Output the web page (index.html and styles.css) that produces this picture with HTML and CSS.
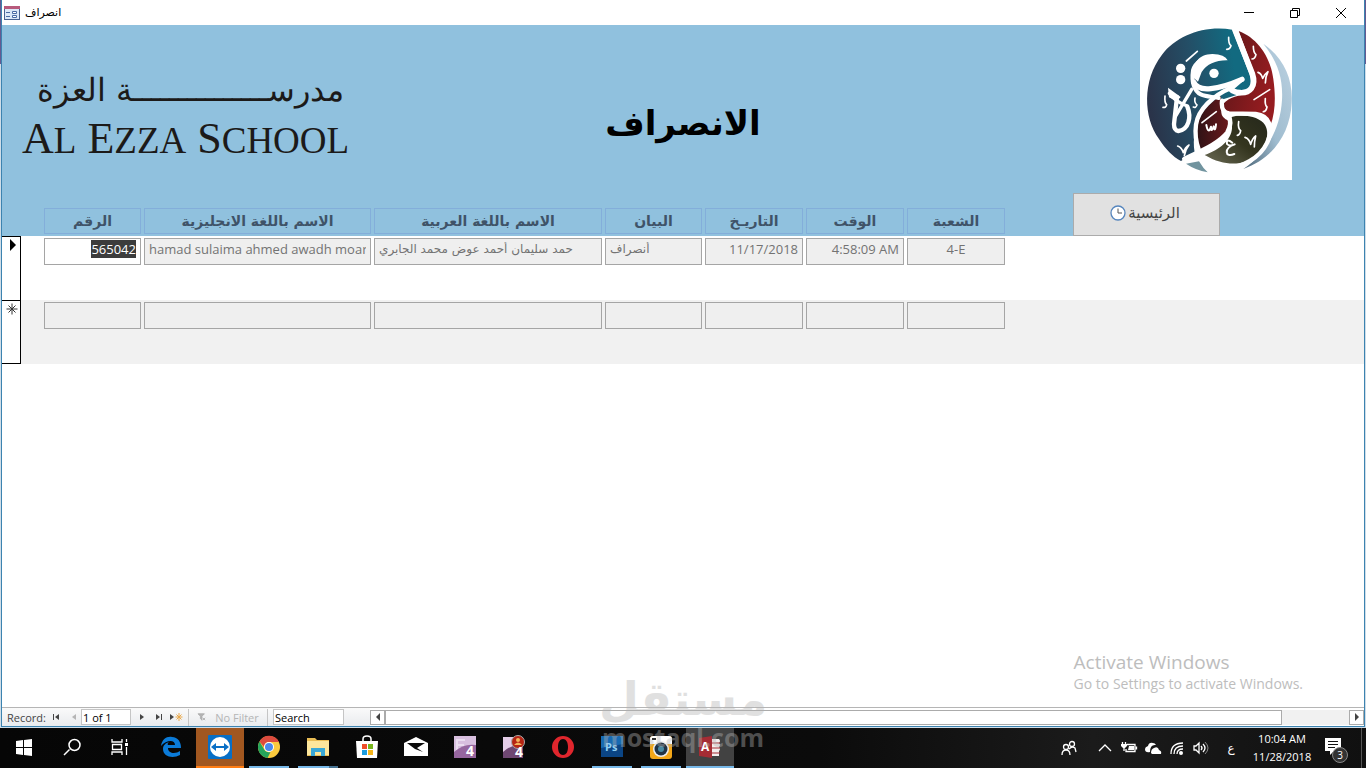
FILE: index.html
```html
<!DOCTYPE html>
<html lang="ar">
<head>
<meta charset="utf-8">
<title>انصراف</title>
<link rel="stylesheet" href="styles.css">
</head>
<body>
<div class="window">
  <header class="titlebar">
    <svg class="form-icon" viewBox="0 0 16 14" aria-hidden="true"><rect x=".5" y=".5" width="15" height="13" fill="#dce8f8" stroke="#4a6291"/><path d="M0 0h16v3H0z" fill="#b85a7c"/><path d="M2 6.500h4M2 10.500h4" stroke="#4a6ba5"/><path d="M8.500 5.500h4v2h-4zM8.500 9.500h4v2h-4z" fill="#fff" stroke="#4a6ba5"/></svg>
    <span class="window-name" dir="rtl">انصراف</span>
    <div class="window-controls">
      <button aria-label="Minimize"><svg viewBox="0 0 12 12"><path d="M1 5.500h10"/></svg></button>
      <button aria-label="Restore"><svg viewBox="0 0 12 12"><path d="M1.500 3.500h7v7h-7zM3.500 3.500v-2h7v7h-2"/></svg></button>
      <button aria-label="Close"><svg viewBox="0 0 12 12"><path d="M1 1l10 10M11 1L1 11"/></svg></button>
    </div>
  </header>

  <main class="form">
    <section class="banner">
      <div class="wordmark">
        <span class="wordmark-ar" dir="rtl">مدرســـــــــــــــة العزة</span>
        <span class="wordmark-en">A<small>l</small> E<small>zza</small> S<small>chool</small></span>
      </div>
      <h1 dir="rtl">الانصراف</h1>
      <svg class="emblem" viewBox="0 3 456 465" role="img" aria-label="العزة">
        <defs>
          <linearGradient id="teal" x1="0" y1=".5" x2="1" y2=".3"><stop offset="0" stop-color="#2a3349"/><stop offset=".45" stop-color="#244e66"/><stop offset=".85" stop-color="#126a80"/></linearGradient>
          <linearGradient id="red" x1="0" y1="0" x2="1" y2=".4"><stop offset="0" stop-color="#5a1618"/><stop offset="1" stop-color="#961c20"/></linearGradient>
          <linearGradient id="maroon" x1="0" y1="0" x2="1" y2="0"><stop offset="0" stop-color="#2c1215"/><stop offset="1" stop-color="#6d191c"/></linearGradient>
          <linearGradient id="olive" x1="0" y1="1" x2="1" y2="0"><stop offset="0" stop-color="#6a6a54"/><stop offset=".5" stop-color="#34351f"/><stop offset="1" stop-color="#25281b"/></linearGradient>
          <linearGradient id="mist" x1="0" y1="1" x2="1" y2="0"><stop offset="0" stop-color="#4b6577"/><stop offset=".45" stop-color="#9fbccf"/><stop offset="1" stop-color="#bdd3e2"/></linearGradient>
        </defs>
        <path fill="#fff" d="M0 3h456v465H0z"/>
        <path fill="url(#teal)" d="M277 17C192 3 110 35 66 92C6 170 10 280 57 345C77 376 98 398 123 411L164 386C157 340 165 305 190 275L230 232L300 210C335 205 338 175 326 145Z"/>
        <path fill="url(#red)" d="M296 21C350 41 391 96 400 165C407 215 407 262 391 306C386 286 377 277 358 274L270 269L244 247C260 224 284 216 320 210C348 203 350 164 340 139Z"/>
        <path fill="url(#maroon)" d="M243 217L244 266Q245 282 266 290L270 314C257 342 226 360 177 378C164 352 163 310 183 276C196 251 218 231 243 217Z"/>
        <path fill="url(#olive)" d="M275 279C315 268 360 280 375 303C393 334 373 377 338 401C310 423 254 429 194 393C240 377 274 348 276 312Z"/>
        <path fill="url(#mist)" d="M370 59C432 103 459 164 455 236C451 330 396 406 310 435C381 387 421 314 426 228C430 159 409 107 370 59Z"/>
        <path fill="#71949f" d="M138 419L177 412Q190 434 203 445Q166 438 138 419Z"/>
        <g fill="none" stroke="#fff" stroke-linecap="round">
          <path stroke-width="17" d="M285 18L337 149C350 188 329 208 300 206Q274 205 270 190"/>
          <path stroke-width="12" d="M236 222C207 215 172 222 161 184Q155 166 159 139C165 116 190 98 222 98"/>
          <path stroke-width="16" d="M161 174C174 208 237 196 306 166"/>
          <path stroke-width="13" d="M306 166L278 190C216 215 174 258 168 302C161 355 181 406 219 439"/>
          <path stroke-width="13" d="M246 230Q242 266 268 268L347 270C391 275 401 314 382 355C360 401 305 435 251 430"/>
          <path stroke-width="14" d="M265 278Q278 296 262 326C235 360 180 382 133 405"/>
          <path stroke-width="13" d="M111 219L102 300Q102 319 115 321C146 317 155 280 142 248"/>
          <path stroke-width="10" d="M88 208Q104 232 142 246M155 196L106 278"/>
        </g>
        <path fill="#fff" d="M84 191L122 219L110 232L87 220ZM155 156C160 119 174 91 217 90Q255 91 263 109Q209 108 185 144L174 173Z"/>
        <g fill="#fff"><circle cx="122" cy="133" r="14"/><circle cx="122" cy="167" r="14"/><circle cx="222" cy="148" r="14"/></g>
        <g fill="none" stroke="#fff" stroke-width="5" stroke-linecap="round" stroke-linejoin="round">
          <path d="M139 111L172 82M186 296L229 263M342 227L389 197"/>
          <path d="M266 40Q265 59 273 65Q270 76 260 76"/>
          <path d="M340 67Q340 86 348 92Q345 105 336 105M376 224Q374 243 381 249Q378 263 370 263M296 293Q293 313 302 320Q300 333 292 334M75 216Q73 236 80 242Q78 252 69 250M165 222Q162 236 171 243Q167 253 160 249"/>
          <path d="M354 145Q364 148 368 163Q373 151 384 143Q376 159 376 177M113 366Q125 370 130 386Q135 370 147 363Q137 375 133 395M315 340Q328 344 332 361Q337 343 347 336Q343 352 343 369"/>
          <path d="M199 303Q205 333 213 308Q213 329 221 307Q225 328 228 301" stroke-width="6"/>
          <path d="M277 356Q258 341 261 360Q267 368 284 361C251 372 254 403 283 390" stroke-width="6"/>
        </g>
      </svg>
    </section>

    <table class="records">
      <thead>
        <tr>
          <td class="corner"></td>
          <th scope="col">الرقم</th>
          <th scope="col">الاسم باللغة الانجليزية</th>
          <th scope="col">الاسم باللغة العربية</th>
          <th scope="col">البيان</th>
          <th scope="col">التاريـخ</th>
          <th scope="col">الوقت</th>
          <th scope="col">الشعبة</th>
          <td class="action">
            <button class="home"><svg viewBox="0 0 16 16" aria-hidden="true"><circle cx="8" cy="8" r="7" fill="#fff" stroke="#5585bd" stroke-width="1.300"/><path d="M8 3.500V8h4" fill="none" stroke="#555"/></svg><span dir="rtl">الرئيسية</span></button>
          </td>
        </tr>
      </thead>
      <tbody>
        <tr>
          <td class="selector"><svg viewBox="0 0 12 12" aria-label="Current record"><path d="M4 0l6 6-6 6z"/></svg></td>
          <td><input id="number" class="end current" aria-label="الرقم" value="565042"></td>
          <td><input aria-label="الاسم باللغة الانجليزية" value="hamad sulaima ahmed awadh moar" readonly></td>
          <td><input class="arabic" aria-label="الاسم باللغة العربية" value="حمد سليمان أحمد عوض محمد الجابري" readonly></td>
          <td><input class="arabic" aria-label="البيان" value="أنصراف" readonly></td>
          <td><input class="end" aria-label="التاريخ" value="11/17/2018" readonly></td>
          <td><input class="end" aria-label="الوقت" value="4:58:09 AM" readonly></td>
          <td><input class="middle" aria-label="الشعبة" value="4-E" readonly></td>
        </tr>
        <tr class="blank">
          <td class="selector"><svg viewBox="0 0 12 12" aria-label="New record"><path d="M6 .5v11M.5 6h11M2.500 2.500l7 7M9.500 2.500l-7 7" stroke="#333" fill="none"/></svg></td>
          <td><input aria-label="الرقم" readonly></td>
          <td><input aria-label="الاسم باللغة الانجليزية" readonly></td>
          <td><input aria-label="الاسم باللغة العربية" readonly></td>
          <td><input aria-label="البيان" readonly></td>
          <td><input aria-label="التاريخ" readonly></td>
          <td><input aria-label="الوقت" readonly></td>
          <td><input aria-label="الشعبة" readonly></td>
        </tr>
      </tbody>
    </table>
    <aside class="activate"><strong>Activate Windows</strong><span>Go to Settings to activate Windows.</span></aside>
  </main>

  <footer class="navigator">
    <label for="position">Record:</label>
    <button aria-label="First"><svg viewBox="0 0 10 8"><path d="M1 1h1v6H1zM7 1v6L3 4z"/></svg></button>
    <button aria-label="Previous" disabled><svg viewBox="0 0 10 8"><path d="M7 1v6L3 4z"/></svg></button>
    <input id="position" class="position" value="1 of 1">
    <button aria-label="Next"><svg viewBox="0 0 10 8"><path d="M3 1v6l4-3z"/></svg></button>
    <button aria-label="Last"><svg viewBox="0 0 10 8"><path d="M2 1v6l4-3zM7 1h1v6H7z"/></svg></button>
    <button class="new" aria-label="New record"><svg viewBox="0 0 14 8"><path d="M1 1v6l4-3z"/><path d="M10 0v8M6.500 4h7M7.500 1.500l5 5M12.500 1.500l-5 5" stroke="#eaa94b"/></svg></button>
    <button class="filter" disabled><svg viewBox="0 0 10 10" aria-hidden="true"><path d="M0 1h8L5 4v5L3 7V4zM6 6l3 3M9 6L6 9" stroke="#aaa"/></svg>No Filter</button>
    <input class="search" aria-label="Search" value="Search">
    <div class="scrollbar">
      <button aria-label="Scroll left"><svg viewBox="0 0 10 8"><path d="M7 0v8L3 4z"/></svg></button>
      <div class="track"><div class="thumb"></div></div>
      <button aria-label="Scroll right"><svg viewBox="0 0 10 8"><path d="M3 0v8l4-4z"/></svg></button>
    </div>
  </footer>
</div>

<nav class="taskbar" aria-label="Taskbar">
  <div class="system">
    <button aria-label="Start"><svg viewBox="0 0 24 24"><path fill="#fff" d="M4 6l7-1v7H4zM12 5l8-1v8h-8zM4 13h7v7l-7-1zM12 13h8v8l-8-1z"/></svg></button>
    <button aria-label="Search"><svg viewBox="0 0 24 24"><path fill="none" stroke="#fff" stroke-width="1.500" d="M9.500 14.500L4 20M9 10a5.500 5.500 0 1 0 11 0a5.500 5.500 0 1 0-11 0"/></svg></button>
    <button aria-label="Task view"><svg viewBox="0 0 24 24"><path fill="none" stroke="#fff" stroke-width="1.300" d="M4 4v3h10V4M4 20v-3h10v3M4.500 9.500h9v5h-9zM18.500 4v3M18.500 12v8"/><path fill="#fff" d="M17 8h3v3h-3z"/></svg></button>
  </div>
  <div class="apps">
    <button aria-label="Edge"><svg viewBox="0 0 24 24"><path fill="#0b7bd8" d="M2 11C3 4 8 1 13 2c6 0 9 5 9 11H9c0 6 8 6 12 3v4C14 24 4 22 4 14c0-4 3-6 6-7-1 1-2 2-1 3h7c0-6-9-5-14 1z"/></svg></button>
    <button class="alert" aria-label="TeamViewer"><svg viewBox="0 0 24 24"><rect width="24" height="24" rx="1" fill="#086fc6"/><circle cx="12" cy="12" r="10" fill="#fff"/><path fill="#086fc6" d="M3 12l5-4v3h8V8l5 4-5 4v-3H8v3z"/></svg></button>
    <button class="open" aria-label="Chrome"><svg viewBox="0 0 24 24"><circle cx="12" cy="12" r="11" fill="#fbca3d"/><path fill="#dc4b3e" d="M2.500 6.500A11 11 0 0 1 22 7H12a5 5 0 0 0-5 5z"/><path fill="#24a45b" d="M2.500 6.500l5 8.500q2 3 6 2l-3 6A11 11 0 0 1 2.500 6.500z"/><circle cx="12" cy="12" r="5" fill="#fff"/><circle cx="12" cy="12" r="4" fill="#4a89ed"/></svg></button>
    <button class="open group" aria-label="File Explorer"><svg viewBox="0 0 24 24"><path fill="#e9bd55" d="M1 3h8l2 2h12v16H1z"/><path fill="#fce69c" d="M1 6h22v14H1z"/><path fill="#39a8d6" d="M5 13h14v8h-4v-4H9v4H5z"/></svg></button>
    <button aria-label="Store"><svg viewBox="0 0 24 24"><path fill="#fff" d="M1 6h22l-1 17H2z"/><path fill="none" stroke="#fff" stroke-width="1.500" d="M8 7V4q0-3 4-3t4 3v3"/><path fill="#ef4e29" d="M7 9h5v5H7z"/><path fill="#77b51c" d="M13 9h5v5h-5z"/><path fill="#1c9de0" d="M7 15h5v5H7z"/><path fill="#f6b51a" d="M13 15h5v5h-5z"/></svg></button>
    <button aria-label="Mail"><svg viewBox="0 0 24 24"><path fill="#fff" d="M0 8l12-6 12 6v13H0z"/><path fill="#0a0a0a" d="M3 8h18l-8 5 6 4-8-3z"/></svg></button>
    <button aria-label="Form editor"><svg viewBox="0 0 24 24"><rect x="1" y="1" width="22" height="22" fill="#d8bfdf"/><path d="M3 4h9v2H5v3h6v2H5v4H3z" fill="#eadcf0"/><path d="M1 17q10-9 22-7v13H1z" fill="#96669f"/><text x="13" y="21" class="digit">4</text></svg></button>
    <button aria-label="Form recorder"><svg viewBox="0 0 24 24"><rect x="1" y="2" width="20" height="21" fill="#e4cde8"/><path d="M1 17q10-9 20-7v13H1z" fill="#6e4772"/><circle cx="16" cy="7" r="6.500" fill="#b62413" stroke="#aaa"/><circle cx="16" cy="5" r="2" fill="#f4b35b"/><path fill="#f4b35b" d="M12 10q4-5 8 0z"/><text x="13" y="22" class="digit">4</text></svg></button>
    <button aria-label="Opera"><svg viewBox="0 0 24 24"><path fill="#e0262d" fill-rule="evenodd" d="M12 1a11 11 0 1 0 0 22a11 11 0 0 0 0-22zM12 4c3 0 5 3 5 8s-2 8-5 8-5-3-5-8 2-8 5-8z"/></svg></button>
    <button class="open" aria-label="Photoshop"><svg viewBox="0 0 24 24"><rect x="1" y="1" width="22" height="21" fill="#0b4585"/><path fill="#176ab2" d="M1 1h22v8L1 13z"/><text x="5" y="16" class="ps">Ps</text></svg></button>
    <button class="open" aria-label="Camera"><svg viewBox="0 0 24 24"><rect x="1" y="1" width="22" height="23" rx="3" fill="#f4a718"/><path fill="#fff" d="M1 9V4q0-3 3-3h16q3 0 3 3v5z"/><circle cx="12" cy="14" r="8" fill="#eee"/><circle cx="12" cy="14" r="6.500" fill="#203345"/><circle cx="12" cy="14" r="3" fill="#4989a1"/><path fill="#333" d="M3 3h4v2H3z"/></svg></button>
    <button class="open active" aria-label="Access"><svg viewBox="0 0 24 24"><path fill="#f4eeee" d="M12 4h9q2 2 0 4 2 2 0 4 2 2 0 4v5h-9z"/><path stroke="#a52c34" d="M14 8h8M14 13h8M14 18h8"/><path fill="#a52c34" d="M1 3l13-2v22L1 21z"/><text x="3" y="16" class="access">A</text></svg></button>
  </div>
  <div class="tray">
    <button aria-label="People"><svg viewBox="0 0 16 16"><g class="line"><circle cx="5" cy="7" r="2.500"/><circle cx="11" cy="4" r="2.500"/><path d="M1 15q0-5 4-5t4 5M8 9q3-3 6-1l1 4"/></g></svg></button>
    <button aria-label="Hidden icons"><svg viewBox="0 0 16 16"><path class="line" d="M2 11l6-6 6 6"/></svg></button>
    <button aria-label="Battery"><svg viewBox="0 0 16 16"><path class="line" d="M6 4.500h8v7H5V9M15.500 6.500v3M1.500 2v3M4.500 2v3M3 7v4"/><path fill="#fff" d="M0 4h6v2L4 8H2L0 6zM8 6h5v4H7z"/></svg></button>
    <button aria-label="OneDrive"><svg viewBox="0 0 16 16"><path fill="#fff" d="M5 12q-5 1-5-3 0-2 3-3 1-4 5-3 2 0 3 2-6-1-6 7zM6 13q0-4 3-5 4-2 5 2 3 1 2 4H7z"/></svg></button>
    <button aria-label="Network"><svg viewBox="0 0 16 16"><path class="line" d="M2 14Q2 3 14 3M5 14q0-8 9-8M8 14q0-5 6-5"/><circle cx="12" cy="13" r="2" fill="#fff"/></svg></button>
    <button aria-label="Volume"><svg viewBox="0 0 16 16"><path class="line" d="M1 6h2l3-3v10l-3-3H1zM8 6q2 2 0 4M10 4q4 4 0 8"/><path fill="none" stroke="#888" d="M12 2q6 6 0 12"/></svg></button>
    <button class="language" aria-label="Arabic keyboard">ع</button>
    <button class="clock"><span>10:04 AM</span><span>11/28/2018</span></button>
    <button class="notices" aria-label="Notifications"><svg viewBox="0 0 24 24"><path fill="#fff" d="M1 2h16v13h-7l-4 4v-4H1z"/><path stroke="#111" d="M4 5.500h10M4 8.500h10M4 11.500h7"/></svg><span>3</span></button>
  </div>
</nav>
<div class="watermark" aria-hidden="true"><span class="watermark-ar" dir="rtl">مستقل</span><span class="watermark-en">mostaql.com</span></div>
<script src="script.js"></script>
</body>
</html>
```
FILE: styles.css
```css
* { box-sizing: border-box; }
body {
  margin: 0;
  min-height: 100vh;
  display: flex;
  flex-direction: column;
  position: relative;
  background: linear-gradient(#655a91 64px, #cfdde8 64px);
  font-family: "Open Sans", "DejaVu Sans", sans-serif;
  font-size: 13px;
  color: #444;
}
button, input { font: inherit; color: inherit; border: 0; margin: 0; padding: 0; border-radius: 0; background: none; }
svg { display: block; overflow: visible; }

.window {
  flex: 1;
  display: flex;
  flex-direction: column;
  margin: 0 1px;
  border: solid #3c83b0;
  border-width: 0 1px 1px;
  background: #fff;
}
.titlebar { display: flex; align-items: center; height: 25px; padding-left: 2px; background: #fff; }
.form-icon { width: 16px; height: 14px; }
.window-name { margin-left: 5px; font-family: "DejaVu Sans", sans-serif; font-size: 11px; color: #000; }
.window-controls { display: flex; margin-left: auto; }
.window-controls button { width: 46px; height: 24px; display: grid; place-items: center; }
.window-controls svg { width: 12px; height: 12px; fill: none; stroke: #000; }

.form { flex: 1; position: relative; }
.banner {
  display: grid;
  grid-template-columns: 1fr auto 1fr;
  height: 168px;
  padding: 0 20px;
  background: #90c1de;
}
.wordmark { display: flex; flex-direction: column; padding-top: 38px; color: #1c1a19; }
.wordmark-ar { width: 322px; font-family: "DejaVu Sans", sans-serif; font-size: 32px; font-weight: 200; line-height: 54px; white-space: nowrap; }
.wordmark-en { font-family: "Liberation Serif", serif; font-size: 44px; line-height: 44px; white-space: nowrap; }
.wordmark-en small { font-size: 37px; text-transform: uppercase; }
h1 { margin: 0; padding-top: 68px; font-family: "DejaVu Sans", sans-serif; font-size: 34px; line-height: 60px; color: #000; }
.emblem { width: 152px; height: 155px; justify-self: end; margin-right: 52px; }

.records, .records thead, .records tbody { display: block; }
.records tr {
  display: grid;
  grid-template-columns: 39px 97fr 227fr 228fr 97fr 98fr 98fr 98fr 356fr;
  column-gap: 3px;
  height: 64px;
}
.records thead tr { height: 43px; align-items: end; background: #90c1de; }
.records td, .records th { min-width: 0; padding: 0; }
.records th {
  height: 26px;
  margin-bottom: 2px;
  border: 1px solid #83aeda;
  font-family: "DejaVu Sans", sans-serif;
  font-size: 14px;
  line-height: 24px;
  color: #3f5368;
  white-space: nowrap;
}
.records tbody td { padding-top: 2px; }
.records tbody .selector { width: 19px; padding: 2px 0 0 4px; border: 1px solid #000; border-width: 1px 1px 0 0; background: #fff; }
.records .blank .selector { border-bottom-width: 1px; }
.selector svg { width: 12px; height: 12px; }
.records .blank { background: #f1f1f1; }
.records input {
  width: 100%;
  height: 27px;
  padding: 0 4px 6px;
  border: 1px solid #a5a5a5;
  background: #efefef;
  color: #737373;
  outline: 0;
}
.records .end { text-align: right; }
.records .middle { text-align: center; }
.records .arabic { font-family: "DejaVu Sans", sans-serif; font-size: 12px; }
.records .current { background: #fff; }
.current::selection { background: #3c3c3c; color: #fff; }
.records .action { padding-left: 65px; }
.home {
  display: flex;
  align-items: center;
  justify-content: center;
  gap: 2px;
  width: 147px;
  height: 43px;
  padding: 0 3px 3px 0;
  border: 1px solid #ababab;
  background: #e1e1e1;
  font-family: "DejaVu Sans", sans-serif;
  font-size: 15px;
}
.home svg { width: 16px; height: 16px; }

.activate { position: absolute; right: 61px; bottom: 13px; display: flex; flex-direction: column; color: #bdbdbd; }
.activate strong { font-size: 19px; line-height: 24px; font-weight: 400; }
.activate span { font-size: 14px; line-height: 20px; }

.navigator {
  display: flex;
  align-items: center;
  height: 19px;
  padding-left: 5px;
  border-top: 1px solid #b5b5b5;
  background: linear-gradient(#fafafa, #e9ebee);
  font-size: 11px;
}
.navigator label { width: 41px; }
.navigator button { width: 17px; height: 17px; display: grid; place-items: center; }
.navigator button svg { width: 10px; height: 8px; fill: #444; }
.navigator button:disabled { color: #b5b5b5; }
.navigator button:disabled svg { fill: #b5b5b5; }
.navigator input { height: 16px; border: 1px solid #c5c5c5; padding: 0 1px; background: #fff; color: #000; }
.navigator .position { width: 50px; margin: 0 2px 0 -1px; }
.navigator .new { margin-right: 4px; }
.navigator .new svg { width: 14px; }
.navigator .filter { display: flex; align-items: center; justify-content: center; gap: 8px; width: 80px; border: solid #c5c5c5; border-width: 0 1px; }
.navigator .search { width: 71px; margin: 0 26px 0 5px; }
.scrollbar { flex: 1; display: flex; align-items: center; height: 18px; background: #fff; }
.scrollbar button { width: 15px; height: 15px; border: 1px solid #ababab; background: #fff; }
.track { flex: 1; height: 15px; background: #f1f1f1; }
.thumb { width: 93%; height: 15px; border: 1px solid #ababab; background: #fff; }

.taskbar { display: flex; height: 40px; margin-top: 1px; background: linear-gradient(90deg, #060606, #0b0b0b 60%, #1b1b1b 80%, #101010); color: #fff; }
.system, .apps, .tray { display: flex; }
.system button, .apps button { width: 48px; height: 40px; display: grid; place-items: center; border-bottom: 2px solid transparent; }
.system svg, .apps svg { width: 24px; height: 24px; }
.apps { gap: 1px; margin-left: 3px; }
.apps .alert { background: #a15720; border-color: #ff7d13; }
.apps .open { width: 40px; margin: 0 4px; border-color: #77b8e8; }
.apps .group { border-image: linear-gradient(90deg, #77b8e8 77%, #467292 77%) 1; }
.apps .active { width: 48px; margin: 0; background: #424242; }
.digit { font: bold 14px "Open Sans", sans-serif; fill: #fff; }
.ps { font: bold 11px "Open Sans", sans-serif; fill: #8ed0f5; }
.access { font: bold 12px "Open Sans", sans-serif; fill: #fff; }
.tray { flex: 1; align-items: center; justify-content: flex-end; border-right: 1px solid #555; margin-right: 4px; }
.tray button { width: 24px; height: 40px; display: grid; place-items: center; }
.tray button:first-child { margin-right: 12px; }
.tray svg { width: 16px; height: 16px; }
.line { fill: none; stroke: #fff; stroke-width: 1.300; }
.tray .language { width: 36px; font-family: "DejaVu Sans", sans-serif; font-size: 12px; }
.tray .clock { width: 66px; padding: 2px 0; font-size: 11px; line-height: 18px; white-space: nowrap; }
.tray .notices { position: relative; width: 46px; padding-right: 4px; }
.notices svg { width: 24px; height: 24px; }
.notices span { position: absolute; left: 17px; top: 19px; width: 16px; height: 16px; border: 1px solid #888; border-radius: 50%; background: #333; font-size: 10px; line-height: 14px; }

.watermark { position: absolute; left: 44%; bottom: 17px; width: 164px; display: flex; flex-direction: column; align-items: center; color: #b4b4b4; opacity: 0.4; pointer-events: none; }
.watermark-ar { font: bold 46px/48px "DejaVu Sans", sans-serif; }
.watermark-en { font: bold 25px/28px "Open Sans", sans-serif; }
```
FILE: script.js
```js
document.getElementById("number").select();
```
